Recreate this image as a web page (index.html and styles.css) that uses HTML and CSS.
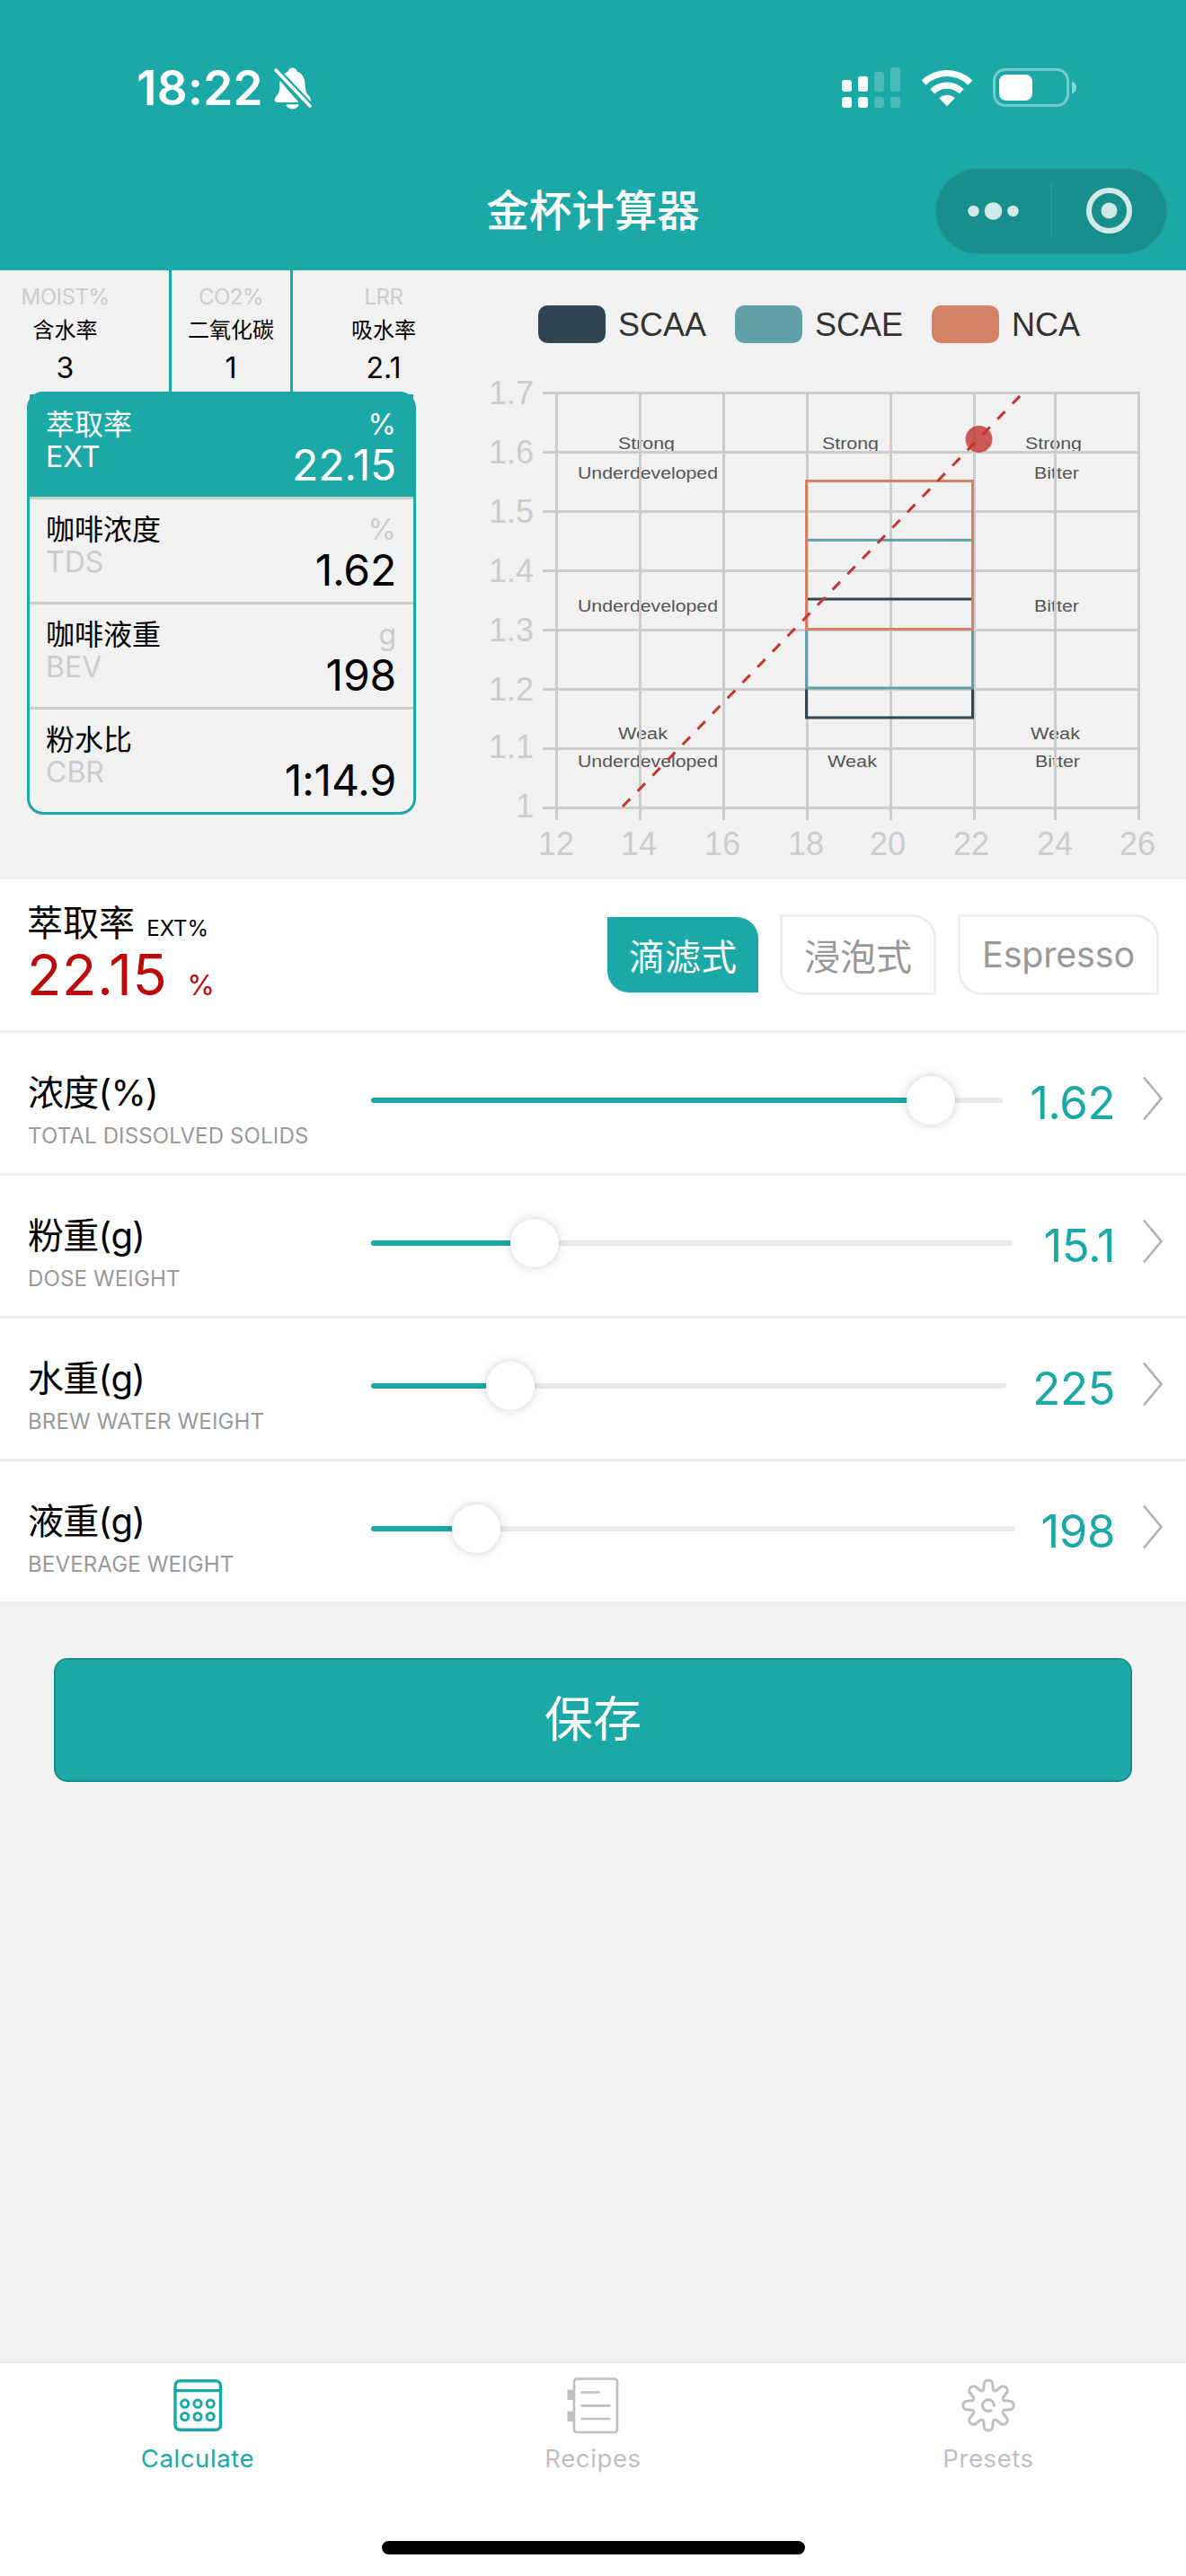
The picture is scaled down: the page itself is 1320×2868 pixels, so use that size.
FILE: index.html
```html
<!DOCTYPE html>
<html lang="zh-CN">
<head>
<meta charset="utf-8">
<title>金杯计算器</title>
<link rel="stylesheet" href="styles.css">
</head>
<body>
<div class="app">
  <header class="header">
    <div class="status">
      <div class="status-left">
        <span class="clock">18:22</span>
        <svg class="bell" width="44" height="48" viewBox="0 0 44 48">
          <path fill="#fff" d="M12.5 9.5C14 7.500 15.500 6.500 16.800 6C17.300 3 19 1.500 21.500 1.500S26 3 26.500 6C32 8 35 13 35.500 21C36 29 36.500 32 40 35.500C41.800 37.500 42 39.500 41.500 42.500ZM7.500 17L28.500 43L6 43C2 43 1 40.500 2.200 37.500C4 34 7 33 7.200 26C7.300 22 7.300 20 7.500 17ZM14.500 45.500H28.500C28 49 25 51 21.500 51S15 49 14.500 45.500Z" transform="scale(1 .93)"/>
          <path d="M3 4L41 44" stroke="#1ba9a7" stroke-width="8"/>
          <path d="M3 4L41 44" stroke="#fff" stroke-width="3.600" stroke-linecap="round"/>
        </svg>
      </div>
      <div class="status-right">
        <svg width="66" height="46" viewBox="0 0 66 46" fill="#fff">
          <rect x="0" y="14" width="11" height="13" rx="3"/><rect x="18" y="10" width="11" height="17" rx="3"/>
          <rect x="0" y="33" width="11" height="12" rx="3"/><rect x="18" y="33" width="11" height="12" rx="3"/>
          <g opacity=".2"><rect x="36" y="5" width="11" height="22" rx="3"/><rect x="54" y="0" width="11" height="27" rx="3"/><rect x="36" y="33" width="11" height="12" rx="3"/><rect x="54" y="33" width="11" height="12" rx="3"/></g>
        </svg>
        <svg class="wifi" width="58" height="44" viewBox="0 0 58 44" fill="#fff">
          <path d="M.6 13.600A40.500 40.500 0 0 1 57.400 13.600L52.300 18.700A33 33 0 0 0 5.700 18.700Z"/>
          <path d="M10.300 23.300A26.500 26.500 0 0 1 47.700 23.300L42.600 28.400A19.500 19.500 0 0 0 15.400 28.400Z"/>
          <path d="M20.200 33.300A12.600 12.600 0 0 1 37.800 33.300L29 42.300Z"/>
        </svg>
        <svg width="94" height="44" viewBox="0 0 94 44">
          <rect x="1.500" y="1.500" width="82" height="40" rx="12.500" fill="none" stroke="#fff" stroke-opacity=".4" stroke-width="3"/>
          <rect x="7" y="7" width="37" height="29" rx="8" fill="#fff"/>
          <path d="M88 14.500C91.500 16 93 18.500 93 21.500S91.500 27 88 28.500Z" fill="#fff" opacity=".5"/>
        </svg>
      </div>
    </div>
    <div class="nav">
      <h1 class="nav-title">金杯计算器</h1>
      <svg class="capsule" width="258" height="96" viewBox="0 0 258 96">
        <rect x=".75" y=".75" width="256.500" height="94.500" rx="47.250" fill="#188f8c" stroke="#279794" stroke-width="1.500"/>
        <path d="M129 18V78" stroke="#2a9a97" stroke-width="1.500"/>
        <g fill="#d1e9e8"><circle cx="42.500" cy="48" r="6.200"/><circle cx="64.500" cy="48" r="9.800"/><circle cx="86.500" cy="48" r="6.200"/><circle cx="193.500" cy="47.500" r="9"/></g>
        <circle cx="193.500" cy="47.500" r="22.500" fill="none" stroke="#d1e9e8" stroke-width="6"/>
      </svg>
    </div>
  </header>

  <section class="overview">
    <div class="summary">
      <div class="factors">
        <div class="factor factor-moist"><span class="factor-code">MOIST%</span><span class="factor-name">含水率</span><span class="factor-value">3</span></div>
        <div class="factor factor-co2"><span class="factor-code">CO2%</span><span class="factor-name">二氧化碳</span><span class="factor-value">1</span></div>
        <div class="factor factor-lrr"><span class="factor-code">LRR</span><span class="factor-name">吸水率</span><span class="factor-value">2.1</span></div>
      </div>
      <div class="card">
        <div class="metric metric-active">
          <div class="metric-label"><span>萃取率</span><span class="muted">EXT</span></div>
          <div class="metric-data"><span class="muted">%</span><span class="metric-value">22.15</span></div>
        </div>
        <div class="metric">
          <div class="metric-label"><span>咖啡浓度</span><span class="muted">TDS</span></div>
          <div class="metric-data"><span class="muted">%</span><span class="metric-value">1.62</span></div>
        </div>
        <div class="metric">
          <div class="metric-label"><span>咖啡液重</span><span class="muted">BEV</span></div>
          <div class="metric-data"><span class="muted">g</span><span class="metric-value">198</span></div>
        </div>
        <div class="metric">
          <div class="metric-label"><span>粉水比</span><span class="muted">CBR</span></div>
          <div class="metric-data"><span class="muted"></span><span class="metric-value">1:14.9</span></div>
        </div>
      </div>
    </div>
    <svg class="chart" width="792" height="678" viewBox="528 301 792 678">
      <g class="legend">
        <rect x="599" y="340" width="75" height="42" rx="10.500" fill="#2f4554"/><text x="688" y="374">SCAA</text>
        <rect x="818" y="340" width="75" height="42" rx="10.500" fill="#61a0a8"/><text x="907" y="374">SCAE</text>
        <rect x="1037" y="340" width="75" height="42" rx="10.500" fill="#d48265"/><text x="1126" y="374">NCA</text>
      </g>
      <g class="zones">
        <text x="688" y="499.500" textLength="63" lengthAdjust="spacingAndGlyphs">Strong</text>
        <text x="915" y="499.500" textLength="63" lengthAdjust="spacingAndGlyphs">Strong</text>
        <text x="1141" y="499.500" textLength="63" lengthAdjust="spacingAndGlyphs">Strong</text>
        <text x="643" y="532.500" textLength="156" lengthAdjust="spacingAndGlyphs">Underdeveloped</text>
        <text x="1151" y="532.500" textLength="50" lengthAdjust="spacingAndGlyphs">Bitter</text>
        <text x="643" y="681" textLength="156" lengthAdjust="spacingAndGlyphs">Underdeveloped</text>
        <text x="1151" y="681" textLength="50" lengthAdjust="spacingAndGlyphs">Bitter</text>
        <text x="688" y="823" textLength="55" lengthAdjust="spacingAndGlyphs">Weak</text>
        <text x="1147" y="823" textLength="55" lengthAdjust="spacingAndGlyphs">Weak</text>
        <text x="643" y="853.500" textLength="156" lengthAdjust="spacingAndGlyphs">Underdeveloped</text>
        <text x="921" y="853.500" textLength="55" lengthAdjust="spacingAndGlyphs">Weak</text>
        <text x="1152" y="853.500" textLength="50" lengthAdjust="spacingAndGlyphs">Bitter</text>
      </g>
      <path class="grid" d="M604 437.500H1269M604 503.500H1269M604 569.500H1269M604 635.500H1269M604 701.500H1269M604 767.500H1269M604 833.500H1269M604 899.500H1269M619.500 436V913M712.500 437V913M805.500 437V913M898.500 437V913M991.500 437V913M1084.500 437V913M1174.500 437V913M1267.500 436V913"/>
      <g class="axis axis-y">
        <text x="594" y="449.500">1.7</text><text x="594" y="515.500">1.6</text><text x="594" y="581.500">1.5</text><text x="594" y="647.500">1.4</text>
        <text x="594" y="713.500">1.3</text><text x="594" y="779.500">1.2</text><text x="594" y="844">1.1</text><text x="594" y="910">1</text>
      </g>
      <g class="axis axis-x">
        <text x="619" y="952">12</text><text x="711" y="952">14</text><text x="804" y="952">16</text><text x="897" y="952">18</text>
        <text x="988" y="952">20</text><text x="1081" y="952">22</text><text x="1174" y="952">24</text><text x="1266" y="952">26</text>
      </g>
      <g fill="none" stroke-width="3">
        <rect x="897.500" y="667" width="185" height="132" stroke="#2f4554"/>
        <rect x="897.500" y="601.300" width="185" height="164.700" stroke="#61a0a8"/>
        <rect x="897.500" y="535.500" width="185" height="165" stroke="#d48265"/>
      </g>
      <circle cx="1089.500" cy="489" r="15" fill="#c23531" opacity=".8"/>
      <path d="M693 898L1138.500 437.500" fill="none" stroke="#c23531" stroke-width="3" stroke-dasharray="12 12"/>
    </svg>
  </section>

  <section class="result">
    <div class="result-main">
      <div class="result-title">萃取率 <span class="result-code">EXT%</span></div>
      <div class="result-value">22.15<span class="result-unit">%</span></div>
    </div>
    <div class="methods">
      <button class="method method-active">滴滤式</button>
      <button class="method">浸泡式</button>
      <button class="method">Espresso</button>
    </div>
  </section>

  <section class="inputs">
    <div class="row">
      <div class="row-label"><span class="row-name">浓度(%)</span><span class="row-sub">TOTAL DISSOLVED SOLIDS</span></div>
      <div class="slider" style="width:703px"><i class="fill" style="width:623px"></i><i class="thumb" style="left:623px"></i></div>
      <span class="row-value">1.62</span>
      <svg class="chevron" width="24" height="50" viewBox="0 0 24 50"><path d="M2 1.500L21.500 25L2 48.500"/></svg>
    </div>
    <div class="row">
      <div class="row-label"><span class="row-name">粉重(g)</span><span class="row-sub">DOSE WEIGHT</span></div>
      <div class="slider" style="width:714px"><i class="fill" style="width:182px"></i><i class="thumb" style="left:182px"></i></div>
      <span class="row-value">15.1</span>
      <svg class="chevron" width="24" height="50" viewBox="0 0 24 50"><path d="M2 1.500L21.500 25L2 48.500"/></svg>
    </div>
    <div class="row">
      <div class="row-label"><span class="row-name">水重(g)</span><span class="row-sub">BREW WATER WEIGHT</span></div>
      <div class="slider" style="width:707px"><i class="fill" style="width:155px"></i><i class="thumb" style="left:155px"></i></div>
      <span class="row-value">225</span>
      <svg class="chevron" width="24" height="50" viewBox="0 0 24 50"><path d="M2 1.500L21.500 25L2 48.500"/></svg>
    </div>
    <div class="row">
      <div class="row-label"><span class="row-name">液重(g)</span><span class="row-sub">BEVERAGE WEIGHT</span></div>
      <div class="slider" style="width:717px"><i class="fill" style="width:117px"></i><i class="thumb" style="left:117px"></i></div>
      <span class="row-value">198</span>
      <svg class="chevron" width="24" height="50" viewBox="0 0 24 50"><path d="M2 1.500L21.500 25L2 48.500"/></svg>
    </div>
  </section>

  <main class="actions"><button class="save">保存</button></main>

  <nav class="tabs">
    <div class="tab-list">
      <div class="tab tab-active">
        <svg width="64" height="64" viewBox="-32 -32 64 64" fill="none" stroke="currentColor" stroke-width="3">
          <rect x="-25" y="-27.300" width="50.500" height="54.600" rx="5.500" stroke-width="3.500"/><path d="M-25-16.300H25.500" stroke-width="3.300"/>
          <circle cx="-14.300" cy="-1.800" r="4.100"/><circle cx="0" cy="-1.800" r="4.100"/><circle cx="14.200" cy="-1.800" r="4.100"/>
          <circle cx="-14.300" cy="12.500" r="4.100"/><circle cx="0" cy="12.500" r="4.100"/><circle cx="14.200" cy="12.500" r="4.100"/>
        </svg>
        <span>Calculate</span>
      </div>
      <div class="tab">
        <svg width="64" height="64" viewBox="-32 -32 64 64" fill="none" stroke="currentColor" stroke-width="2.700">
          <rect x="-21" y="-29.500" width="48" height="59.500" rx="3"/>
          <path d="M-13.500-14.500H7.500M-13.500 .3H19.500M-13.500 15H19.500"/>
          <path d="M-28.500-17.500h7.500v11.500h-7.500zM-28.500 6.500h7.500v11.500h-7.500z" fill="currentColor" stroke="none"/>
        </svg>
        <span>Recipes</span>
      </div>
      <div class="tab">
        <svg width="64" height="64" viewBox="-32 -32 64 64" fill="none" stroke="currentColor" stroke-width="3">
          <defs><path id="tooth" d="M-6.700-16.200C-5.200-16.800-5-18.500-4.800-23.300A4.800 4.800 0 0 1 4.800-23.300C5-18.500 5.200-16.800 6.700-16.200"/></defs>
          <use href="#tooth"/><use href="#tooth" transform="rotate(45)"/><use href="#tooth" transform="rotate(90)"/><use href="#tooth" transform="rotate(135)"/>
          <use href="#tooth" transform="rotate(180)"/><use href="#tooth" transform="rotate(225)"/><use href="#tooth" transform="rotate(270)"/><use href="#tooth" transform="rotate(315)"/>
          <path d="M6.200 1.500A6.400 6.400 0 1 0 4 5"/>
        </svg>
        <span>Presets</span>
      </div>
    </div>
    <div class="home-bar"></div>
  </nav>
</div>
</body>
</html>
```
FILE: styles.css
```css
* { box-sizing: border-box; }
body { margin: 0; background: #f1f1f1; color: #000; font-family: Inter, "Noto Sans CJK SC", sans-serif; }
svg { display: block; flex: none; }
button { font-family: inherit; margin: 0; cursor: pointer; }
.app { width: 1320px; height: 2868px; display: flex; flex-direction: column; }

.header { height: 301px; background: #1ba9a7; color: #fff; padding-top: 62px; }
.status { height: 72px; display: flex; justify-content: space-between; padding: 0 121px 0 152px; }
.status-left, .status-right { display: flex; align-items: center; }
.status-left { gap: 11px; }
.clock { font-size: 53px; font-weight: 600; line-height: 72px; letter-spacing: 0.3px; }
.status-right { gap: 22px; }
.nav { height: 96px; margin-top: 53px; display: grid; grid-template-columns: 258px 1fr 258px; align-items: center; padding: 0 21px; }
.nav-title { grid-column: 2; margin: 0; text-align: center; font-size: 47.500px; line-height: 60px; font-weight: 500; }

.overview { height: 678px; display: flex; flex: none; }
.summary { width: 528px; }
.factors { height: 135px; display: flex; }
.factor { display: flex; flex-direction: column; align-items: center; padding-top: 13px; }
.factor-moist { width: 188px; padding-right: 43px; }
.factor-co2 { width: 138px; border: solid #1ba9a7; border-width: 0 3px; }
.factor-lrr { width: 202px; }
.factor-code { font-size: 24px; line-height: 34px; color: #ccc; letter-spacing: -0.5px; }
.factor-name { font-size: 24px; line-height: 39px; }
.factor-value { font-size: 32px; line-height: 45px; }
.card { width: 433px; margin-left: 30px; border: 3px solid #1ba9a7; border-radius: 18px; }
.metric { display: flex; justify-content: space-between; height: 117px; border-bottom: 3px solid #ccc; padding: 16px 19px 0 18px; }
.metric:last-child { height: 114px; border-bottom: 0; }
.metric-label, .metric-data { display: flex; flex-direction: column; font-size: 32px; line-height: 36px; }
.metric-data { align-items: flex-end; }
.metric .muted { color: #ccc; min-height: 36px; }
.metric-value { font-size: 48px; line-height: 54px; letter-spacing: -0.2px; }
.metric-active, .metric-active .muted { color: #fff; }
.metric-active { background: #1ba9a7; }

.chart { font-family: "Liberation Sans", Arial, sans-serif; }
.legend { font-size: 36px; fill: #333; }
.zones { font-size: 17.500px; fill: #555; }
.grid { fill: none; stroke: #ccc; stroke-width: 3; }
.axis { font-size: 36px; fill: #ccc; }
.axis-y { text-anchor: end; }
.axis-x { text-anchor: middle; }

.result { height: 171px; flex: none; display: flex; justify-content: space-between; background: #fff; border-bottom: 3px solid #eee; padding: 0 30px; }
.result-main { padding-top: 25px; }
.result-title { font-size: 40px; line-height: 48px; white-space: nowrap; }
.result-code { font-size: 24px; line-height: 1; margin-left: 2px; }
.result-value { font-size: 63px; line-height: 67px; color: #bb0a0a; letter-spacing: 0.6px; }
.result-unit { font-size: 31px; line-height: 1; margin-left: 22px; }
.methods { display: flex; align-items: center; gap: 24px; }
.method { height: 90px; padding: 0 24px; border: 3px solid #eee; border-radius: 0 27px 0 27px; background: #fff; color: #999; font-size: 40px; }
.method:last-child { width: 224px; padding: 0; font-size: 39.500px; letter-spacing: -0.2px; }
.method-active { height: 84px; border: 0; border-radius: 0 24px 0 24px; background: #1ba9a7; color: #fff; }

.inputs { background: #fff; }
.row { height: 159px; display: flex; align-items: center; border-bottom: 3px solid #eee; padding: 0 25px 0 31px; }
.row-label { width: 382px; flex: none; display: flex; flex-direction: column; align-self: flex-start; padding-top: 42px; }
.row-name { font-size: 40px; line-height: 50px; letter-spacing: -0.7px; }
.row-sub { font-size: 24px; line-height: 45px; color: #999; white-space: nowrap; letter-spacing: 0.15px; }
.slider { position: relative; flex: none; height: 6px; margin-bottom: 6px; border-radius: 3px; background: #e9e9e9; }
.fill { display: block; height: 6px; border-radius: 3px; background: #1ba9a7; }
.thumb { position: absolute; top: -24px; width: 54px; height: 54px; margin-left: -27px; border-radius: 50%; background: #fff; box-shadow: 0 0 12px rgba(0, 0, 0, .2); }
.row-value { margin-left: auto; margin-right: 30px; font-size: 51px; line-height: 60px; color: #1ba9a7; letter-spacing: -0.5px; }
.chevron { margin-bottom: 11px; fill: none; stroke: #b2b2b2; stroke-width: 2.700; }

.actions { flex: 1; padding: 60px 60px 0; }
.save { display: block; width: 1200px; height: 138px; border: 2px solid #168d8a; border-radius: 15px; background: #1ba9a7; color: #fff; font-size: 54px; line-height: 134px; padding: 0 0 4px; }

.tabs { height: 239px; background: #fff; border-top: 2px solid #e5e5e5; display: flex; flex-direction: column; justify-content: space-between; align-items: center; padding-bottom: 24px; }
.tab-list { display: grid; grid-template-columns: repeat(3, 440px); padding-top: 15px; }
.tab { display: flex; flex-direction: column; align-items: center; gap: 7px; color: #bfbfbf; font-size: 27.500px; line-height: 40px; letter-spacing: .6px; }
.tab-active { color: #1ba9a7; }
.home-bar { width: 471px; height: 15px; border-radius: 8px; background: #000; }
```
